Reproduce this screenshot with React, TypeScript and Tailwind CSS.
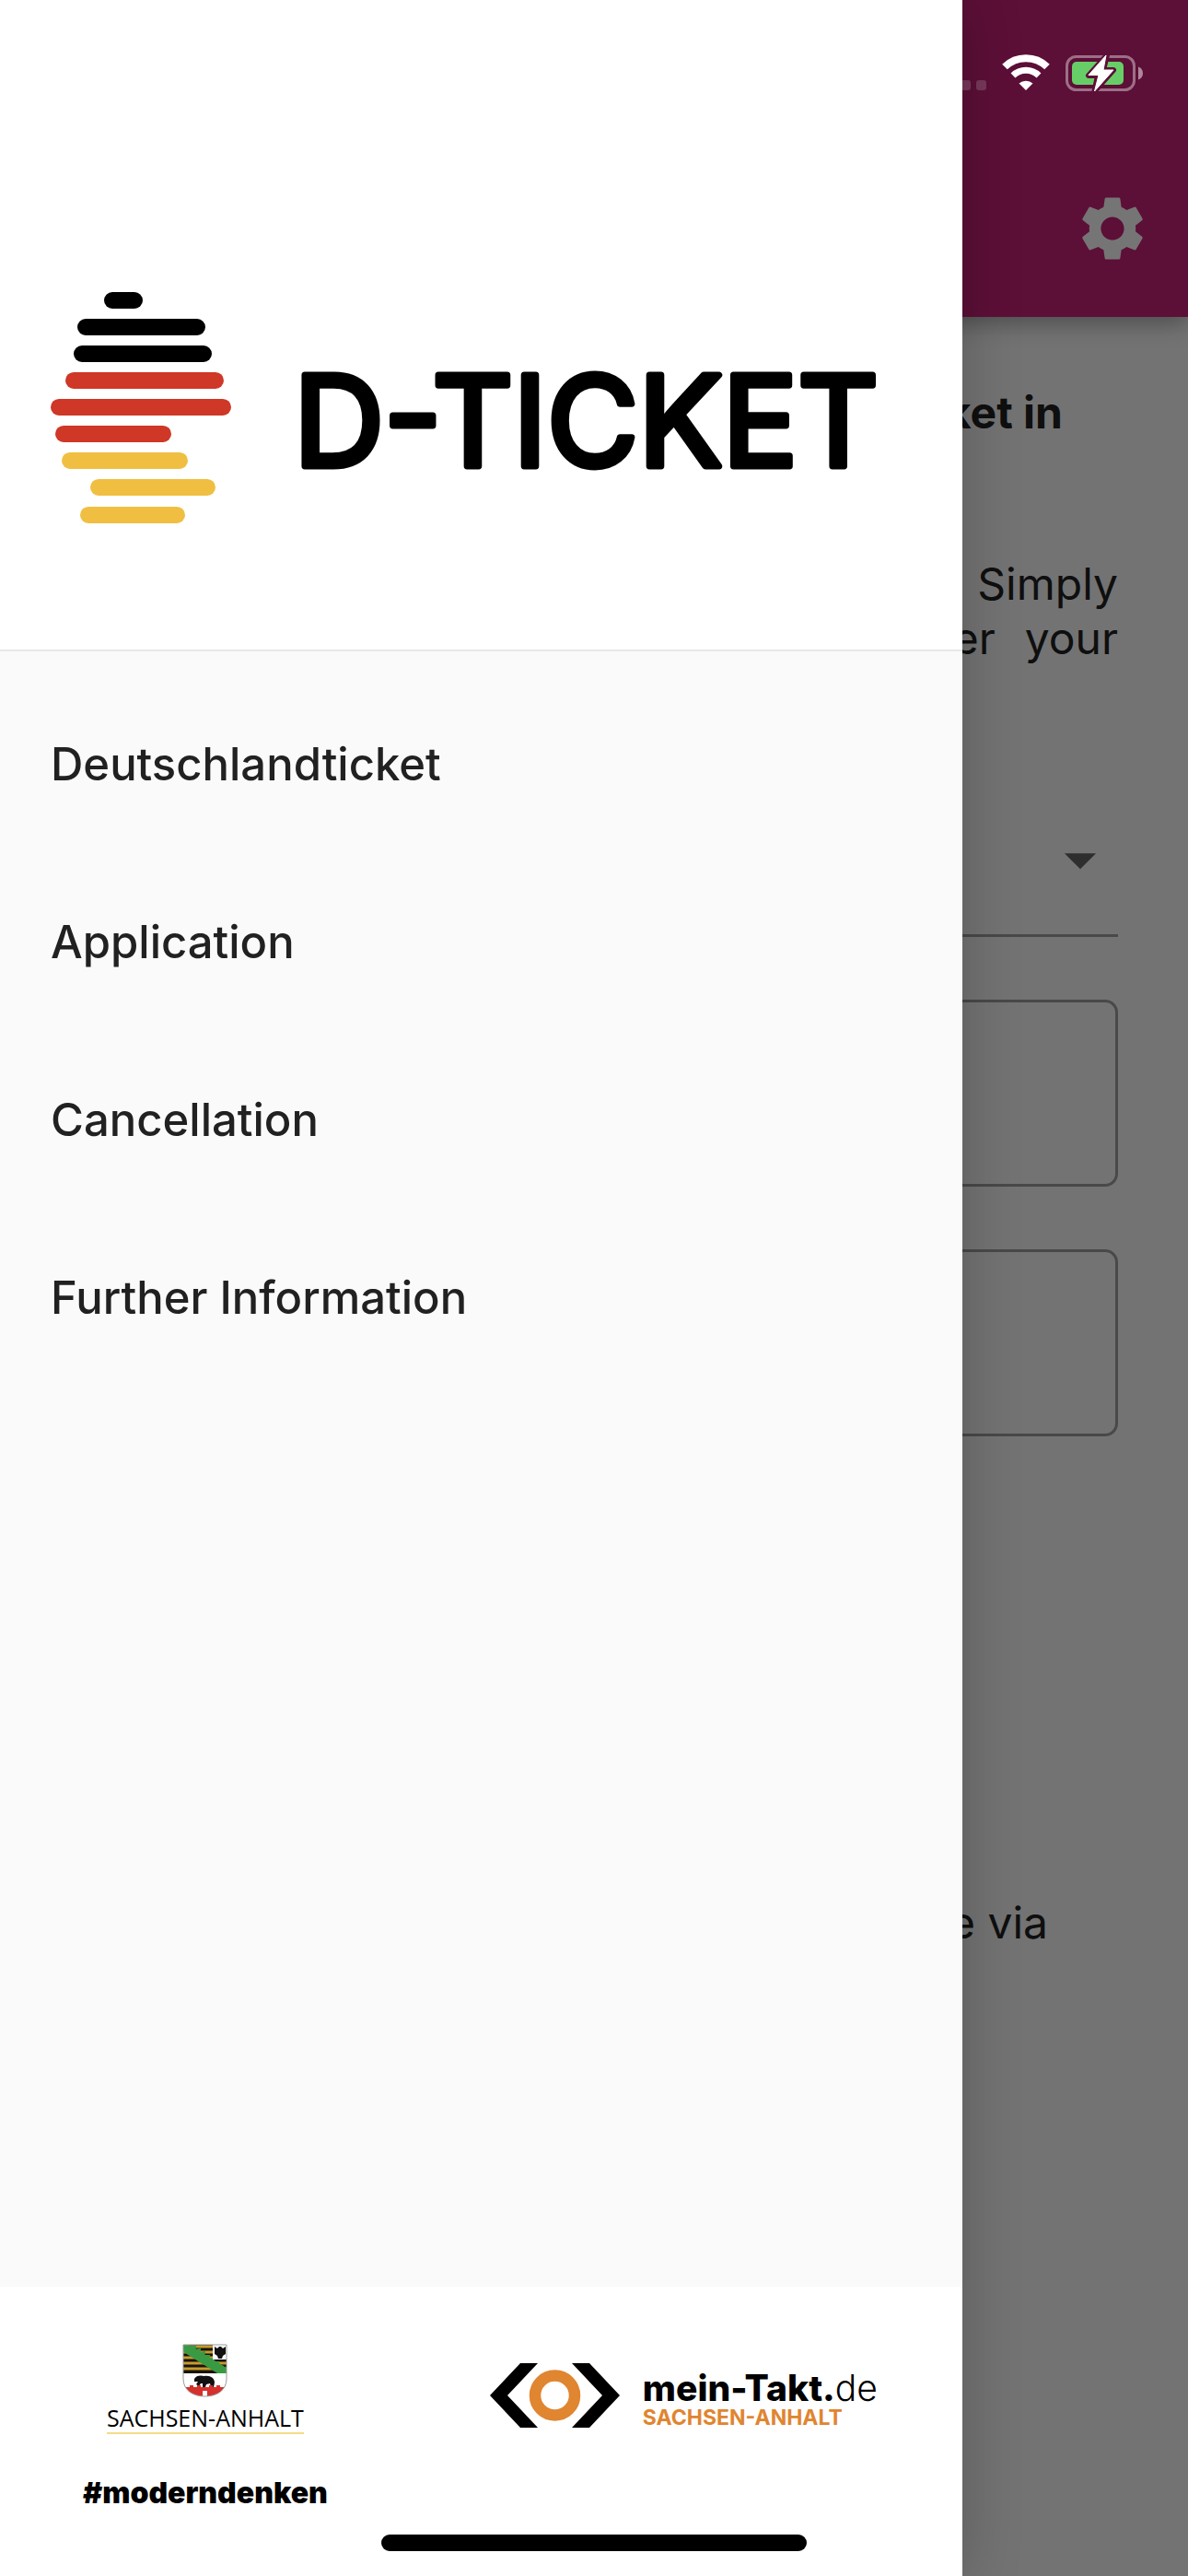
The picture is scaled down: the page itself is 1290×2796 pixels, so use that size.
import { MdArrowDropDown, MdSettings } from 'react-icons/md';

const menuItems = ['Deutschlandticket', 'Application', 'Cancellation', 'Further Information'];

const logoBars = [
  { x: 58, y: 0, width: 42, color: '#000000' },
  { x: 29, y: 29, width: 139, color: '#000000' },
  { x: 25, y: 58, width: 150, color: '#000000' },
  { x: 16, y: 87, width: 172, color: '#cf3727' },
  { x: 0, y: 116, width: 196, color: '#cf3727' },
  { x: 5, y: 145, width: 126, color: '#cf3727' },
  { x: 12, y: 174, width: 137, color: '#f0bf42' },
  { x: 43, y: 203, width: 136, color: '#f0bf42' },
  { x: 32, y: 233, width: 114, color: '#f0bf42' },
];

function TicketLogo() {
  return (
    <svg viewBox="0 0 935 251" className="block w-full" role="img" aria-label="D-Ticket">
      {logoBars.map((bar) => (
        <rect key={bar.y} x={bar.x} y={bar.y} width={bar.width} height="18" rx="9" fill={bar.color} />
      ))}
      <text
        x="264"
        y="189"
        className="font-[Inter,sans-serif] text-[136px] font-normal"
        fill="#000"
        stroke="#000"
        strokeWidth="7"
        strokeLinejoin="round"
      >
        D-TICKET
      </text>
    </svg>
  );
}

function SignalDots() {
  return (
    <svg width="28" height="42" viewBox="0 0 28 42" aria-hidden="true">
      <rect x="0" y="29" width="11" height="11" rx="3" fill="#77385a" />
      <rect x="17" y="29" width="11" height="11" rx="3" fill="#77385a" />
    </svg>
  );
}

function WifiIcon() {
  return (
    <svg width="52" height="40" viewBox="0 0 52 40" fill="none" aria-hidden="true">
      <path d="M3 13.5A33 33 0 0 1 49 13.5" stroke="#fff" strokeWidth="8" />
      <path d="M12 23A20 20 0 0 1 40 23" stroke="#fff" strokeWidth="7" />
      <path d="M18.5 31.500A11.500 11.500 0 0 1 33.500 31.500L26 39Z" fill="#fff" />
    </svg>
  );
}

function BatteryIcon() {
  return (
    <svg width="85" height="42" viewBox="0 0 85 42" fill="none" aria-hidden="true">
      <rect x="1.500" y="3.500" width="73" height="36" rx="10" stroke="#fff" strokeOpacity=".4" strokeWidth="3" />
      <path d="M79 14.500C82 15.500 84 18 84 21.500S82 27.500 79 28.500Z" fill="#fff" fillOpacity=".5" />
      <rect x="7" y="9" width="56" height="25" rx="5" fill="#67ce67" />
      {/* halo first, then the bolt on top */}
      <path d="M45 2L25 24H35L31.500 41L52 18H41Z" fill="#5c0f37" stroke="#5c0f37" strokeWidth="6" strokeLinejoin="round" />
      <path d="M44 2L25 23.500H36L31.500 41L52 18H41L44 2Z" fill="#fff" stroke="#fff" strokeLinejoin="round" />
    </svg>
  );
}

function CoatOfArms() {
  return (
    <svg width="49" height="58" viewBox="0 0 49 58" aria-hidden="true">
      <defs>
        <clipPath id="shield">
          <path d="M1 1H48V38C48 50 38 57 24.500 57S1 50 1 38Z" />
        </clipPath>
      </defs>
      <g clipPath="url(#shield)">
        <rect width="49" height="58" fill="#fff" />
        <rect width="49" height="32" fill="#17130a" />
        <path d="M0 3H49M0 9H49M0 15H49M0 21H49M0 27H49" stroke="#c79a2b" strokeWidth="3" />
        <path d="M0 1H7L48 26V32H38L0 8Z" fill="#3a9a43" />
        <path
          d="M8 3L14 3L13 7L19 6L18 10L24 9L23 13L29 13L28 17L34 16L33 20L39 20L38 24L45 25"
          fill="none"
          stroke="#3a9a43"
          strokeWidth="2"
        />
        <rect x="33" y="0" width="16" height="17" fill="#fff" />
        <path d="M35 3L38 5L40 3H42L44 5L47 3V11L44 13L43 16H39L38 13L35 11Z" fill="#111" />
        <path d="M13 38C15 34 20 34 24 35C30 34 35 37 35 42L34 47H31L30 43L26 44L25 47H22V43L20 43L18 46L15 44L17 41L13 41Z" fill="#111" />
        <path d="M4 47H8V45H12V47H16V45H20V47H29V45H33V47H37V45H41V47H49V58H0Z" fill="#d5302b" />
        <path d="M22 58V51H27V58Z" fill="#fff" />
      </g>
      <path d="M1 1H48V38C48 50 38 57 24.500 57S1 50 1 38Z" fill="none" stroke="#999" strokeWidth="1" />
    </svg>
  );
}

function TaktMark() {
  return (
    <svg width="142" height="70" viewBox="0 0 142 70" aria-hidden="true">
      <path d="M33 0H52L19 35L52 70H33L0 35Z" fill="#000" />
      <path d="M89 0H108L141 35L108 70H89L122 35Z" fill="#000" />
      <circle cx="70.500" cy="35" r="21.500" fill="none" stroke="#e08530" strokeWidth="12.500" />
    </svg>
  );
}

function TicketPage() {
  return (
    <div className="flex flex-col">
      <header className="flex h-[344px] items-end justify-end bg-[#c82178] pr-10 pb-[54px] shadow-[0_6px_24px_rgba(0,0,0,0.35)]">
        <button type="button" aria-label="Settings" className="text-white">
          <MdSettings className="size-[84px]" />
        </button>
      </header>
      <main className="flex flex-col px-[76px] pt-[74px] text-right text-[48px] leading-[59px] text-[#212121]">
        <h1 className="pr-[60px] font-bold">ket in</h1>
        <p className="pt-[127px]">Simply</p>
        <p className="flex justify-end gap-8">
          <span>er</span>
          <span>your</span>
        </p>
        <div className="relative mt-[126px] border-b-[3px] border-[#a0a0a0]">
          <select aria-label="Ticket" className="block h-[166px] w-full appearance-none bg-transparent" />
          <MdArrowDropDown className="pointer-events-none absolute top-11 right-0 size-[82px] text-[#646464]" />
        </div>
        <input
          type="text"
          aria-label="First field"
          className="mt-[68px] h-[203px] rounded-[14px] border-[3px] border-[#a0a0a0] bg-transparent px-9"
        />
        <input
          type="text"
          aria-label="Second field"
          className="mt-[68px] h-[203px] rounded-[14px] border-[3px] border-[#a0a0a0] bg-transparent px-9"
        />
        <p className="pt-[498px] pr-[76px]">e via</p>
      </main>
    </div>
  );
}

function Drawer() {
  return (
    <aside className="absolute inset-y-0 left-0 z-10 flex w-[81%] flex-col bg-[#fafafa] shadow-[0_0_60px_rgba(0,0,0,0.22)]">
      <div className="border-b-2 border-[#e8e8e8] bg-white px-[55px] pt-[317px] pb-[137px]">
        <TicketLogo />
      </div>
      <nav className="flex flex-1 flex-col pt-[26px]">
        {menuItems.map((item) => (
          <a key={item} href="#" className="flex h-[193px] items-center px-[55px] text-[49px] font-medium text-[#212121]">
            {item}
          </a>
        ))}
      </nav>
      <footer className="flex h-[314px] items-start justify-between bg-white pt-[62px] pr-[92px] pl-[90px] text-black">
        <div className="flex flex-col items-center">
          <CoatOfArms />
          <span className="mt-[6px] border-b-2 border-[#f2dc86] font-['Open_Sans',sans-serif] text-[25px] leading-8">
            SACHSEN-ANHALT
          </span>
          <span className="mt-11 text-[32px] leading-10 font-black">#moderndenken</span>
        </div>
        <div className="flex items-center gap-6 pt-5">
          <TaktMark />
          <div className="flex flex-col pt-2">
            <span className="text-[39px] leading-10 font-extrabold">
              mein-Takt.<span className="font-light">de</span>
            </span>
            <span className="text-[23px] leading-6 font-bold text-[#e08530]">SACHSEN-ANHALT</span>
          </div>
        </div>
      </footer>
    </aside>
  );
}

export default function App() {
  return (
    <div className="relative min-h-screen overflow-hidden bg-[#fafafa] font-[Inter,sans-serif]">
      <TicketPage />
      <div className="absolute inset-0 bg-black/54" />
      <div className="absolute top-[58px] right-12 flex items-center gap-[17px]">
        <SignalDots />
        <WifiIcon />
        <BatteryIcon />
      </div>
      <Drawer />
      <div className="absolute bottom-[27px] left-1/2 z-20 h-[18px] w-[462px] -translate-x-1/2 rounded-full bg-black" />
    </div>
  );
}
